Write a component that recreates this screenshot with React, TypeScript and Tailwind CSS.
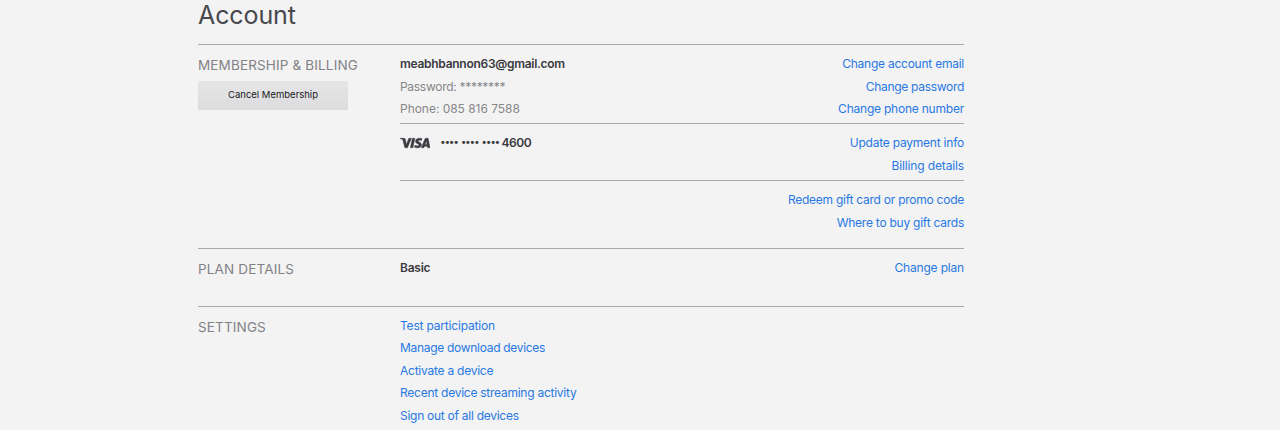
import type { ReactNode } from "react";
import { SiVisa } from "react-icons/si";

interface AccountLink {
  label: string;
  className: string;
}

const contactLinks: AccountLink[] = [
  { label: "Change account email", className: "tracking-[-0.24px]" },
  { label: "Change password", className: "tracking-[-0.3px]" },
  { label: "Change phone number", className: "tracking-[-0.22px]" },
];

const paymentLinks: AccountLink[] = [
  { label: "Update payment info", className: "tracking-[-0.22px]" },
  { label: "Billing details", className: "tracking-[-0.14px]" },
];

const giftLinks: AccountLink[] = [
  { label: "Redeem gift card or promo code", className: "tracking-[-0.25px]" },
  { label: "Where to buy gift cards", className: "tracking-[-0.24px]" },
];

const planLinks: AccountLink[] = [{ label: "Change plan", className: "tracking-[-0.18px]" }];

const settingsLinks: AccountLink[] = [
  { label: "Test participation", className: "tracking-[-0.19px]" },
  { label: "Manage download devices", className: "tracking-[-0.3px]" },
  { label: "Activate a device", className: "tracking-[-0.24px]" },
  { label: "Recent device streaming activity", className: "tracking-[-0.25px]" },
  { label: "Sign out of all devices", className: "tracking-[-0.27px]" },
];

function LinkList({ links, align = "left" }: { links: AccountLink[]; align?: "left" | "right" }) {
  return (
    <ul className={align === "right" ? "flex flex-col items-end" : "flex flex-col items-start"}>
      {links.map((link) => (
        <li key={link.label} className="h-[22.5px]">
          <a href="#" className={`block text-[#2878e4] ${link.className}`}>
            {link.label}
          </a>
        </li>
      ))}
    </ul>
  );
}

interface SectionProps {
  title: string;
  action?: ReactNode;
  className: string;
  children: ReactNode;
}

function Section({ title, action, className, children }: SectionProps) {
  return (
    <section className={`flex border-t border-[#a9a9a9] ${className}`}>
      <header className="w-[202px] shrink-0 pt-[9px]">
        <h2 className="text-[13.5px] leading-[22px] tracking-[0.15px] text-[#828286]">{title}</h2>
        {action}
      </header>
      <div className="flex-1">{children}</div>
    </section>
  );
}

export default function App() {
  return (
    <div className="h-[430px] overflow-hidden bg-[#f3f3f3] font-['Inter',sans-serif] text-[12px] leading-[22.5px] text-[#333]">
      <main className="ml-[198px] w-[766px]">
        <h1 className="h-11 text-[25px] leading-[30px] tracking-[-0.1px] text-[#48484d]">Account</h1>

        <Section
          title="MEMBERSHIP & BILLING"
          className="h-[204px]"
          action={
            <button className="mt-[5px] block h-[29px] w-[150px] bg-linear-to-b from-[#e5e5e6] to-[#dcdcde] text-[9.5px] text-[#202024]">
              Cancel Membership
            </button>
          }
        >
          <div className="flex h-[78px] justify-between pt-[8px]">
            <ul className="text-[#86868a]">
              <li className="h-[22.5px] font-semibold tracking-[-0.28px] text-[#3a3a40]">meabhbannon63@gmail.com</li>
              <li className="h-[22.5px] tracking-[-0.29px]">Password: ********</li>
              <li className="h-[22.5px] tracking-[-0.03px]">Phone: 085 816 7588</li>
            </ul>
            <LinkList links={contactLinks} align="right" />
          </div>
          <div className="flex h-[57px] justify-between border-t border-[#a9a9a9] pt-[8px]">
            <div className="flex h-[22.5px] items-center font-semibold text-[#3a3a40]">
              <SiVisa size={30} className="mr-[10.5px] stroke-current stroke-[0.4]" />
              <span className="w-[61px] font-['Roboto',sans-serif] text-[13px] font-bold tracking-[-0.25px] whitespace-nowrap">•••• •••• ••••</span>
              <span className="tracking-[-0.45px]">4600</span>
            </div>
            <LinkList links={paymentLinks} align="right" />
          </div>
          <div className="border-t border-[#a9a9a9] pt-[8px]">
            <LinkList links={giftLinks} align="right" />
          </div>
        </Section>

        <Section title="PLAN DETAILS" className="h-[58px]">
          <div className="flex justify-between pt-[8px]">
            <span className="font-semibold tracking-[-0.25px] text-[#3a3a40]">Basic</span>
            <LinkList links={planLinks} align="right" />
          </div>
        </Section>

        <Section title="SETTINGS" className="h-[124px]">
          <div className="pt-[7.9px]">
            <LinkList links={settingsLinks} />
          </div>
        </Section>
      </main>
    </div>
  );
}
